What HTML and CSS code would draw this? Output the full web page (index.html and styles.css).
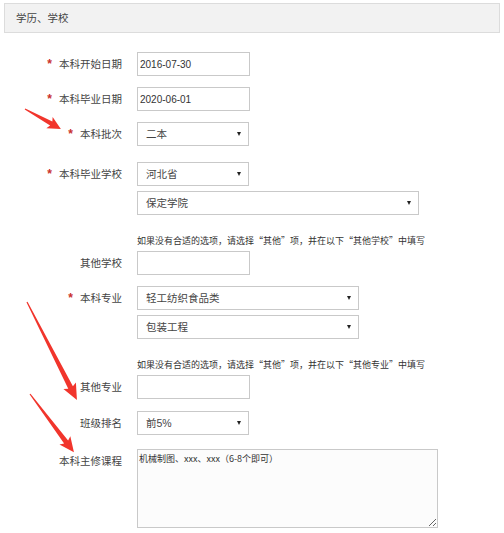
FILE: index.html
```html
<!DOCTYPE html>
<html lang="zh-CN">
<head>
    <meta charset="UTF-8">
    <meta name="viewport" content="width=device-width, initial-scale=1.0">
    <title>学历、学校</title>
    <link rel="stylesheet" href="styles.css">
</head>
<body>
    <div class="panel-head">学历、学校</div>

    <div class="form">
        <div class="row">
            <label class="lbl"><span class="req">*</span>本科开始日期</label>
            <div class="field"><input class="txt" type="text" value="2016-07-30"></div>
        </div>
        <div class="row">
            <label class="lbl"><span class="req">*</span>本科毕业日期</label>
            <div class="field"><input class="txt" type="text" value="2020-06-01"></div>
        </div>
        <div class="row">
            <label class="lbl"><span class="req">*</span>本科批次</label>
            <div class="field">
                <span class="sel short"><select><option>二本</option></select></span>
            </div>
        </div>
        <div class="row school">
            <label class="lbl"><span class="req">*</span>本科毕业学校</label>
            <div class="field">
                <span class="sel short"><select><option>河北省</option></select></span>
                <span class="sel wide"><select><option>保定学院</option></select></span>
            </div>
        </div>
        <div class="row hint-row">
            <span class="lbl"></span>
            <p class="hint">如果没有合适的选项，请选择“其他”项，并在以下“其他学校”中填写</p>
        </div>
        <div class="row">
            <label class="lbl">其他学校</label>
            <div class="field"><input class="txt" type="text"></div>
        </div>
        <div class="row">
            <label class="lbl"><span class="req">*</span>本科专业</label>
            <div class="field">
                <span class="sel mid"><select><option>轻工纺织食品类</option></select></span>
                <span class="sel mid"><select><option>包装工程</option></select></span>
            </div>
        </div>
        <div class="row hint-row">
            <span class="lbl"></span>
            <p class="hint">如果没有合适的选项，请选择“其他”项，并在以下“其他专业”中填写</p>
        </div>
        <div class="row">
            <label class="lbl">其他专业</label>
            <div class="field"><input class="txt" type="text"></div>
        </div>
        <div class="row rank">
            <label class="lbl">班级排名</label>
            <div class="field">
                <span class="sel short"><select><option>前5%</option></select></span>
            </div>
        </div>
        <div class="row course">
            <label class="lbl">本科主修课程</label>
            <div class="field"><textarea class="area">机械制图、xxx、xxx（6-8个即可）</textarea></div>
        </div>
    </div>

    <!-- red arrows drawn over the form -->
    <svg class="arrows" width="504" height="533" viewBox="0 0 504 533">
        <polygon transform="translate(25,109) rotate(29)" points="0,-0.6 30,-2.3 28,-6.5 41,0 28,6.5 30,2.3 0,0.6"/>
        <polygon transform="translate(27,302) rotate(63)" points="0,-0.6 96,-2.6 94,-7 110,0 94,7 96,2.6 0,0.6"/>
        <polygon transform="translate(30,394) rotate(53)" points="0,-0.6 60,-2.5 58,-6.8 73,0 58,6.8 60,2.5 0,0.6"/>
    </svg>
</body>
</html>
```

FILE: styles.css
```css
*{
    margin: 0;
    padding: 0;
    box-sizing: border-box;
}
body{
    position: relative;
    width: 504px;
    height: 533px;
    background: #fff;
    color: #333;
    font-family: "Liberation Sans", "Noto Sans CJK SC", sans-serif;
    font-size: 10.5px;
}
.panel-head{
    margin: 3px 4px 0;
    height: 30px;
    line-height: 28px;
    padding-left: 11px;
    background-color: #f2f2f2;
    border: 1px solid #dcdcdc;
    color: #444;
}
.form{
    display: flex;
    flex-direction: column;
    padding-top: 19px;
}
.row{
    display: grid;
    grid-template-columns: 122px 1fr;
    column-gap: 15px;
    margin-bottom: 11px;
}
.row.school{
    margin-top: 5px;
}
.row.hint-row{
    margin-top: 9px;
    margin-bottom: 4px;
}
.row.rank{
    margin-top: 1px;
}
.row.course{
    margin-top: 3px;
}
.lbl{
    text-align: right;
    line-height: 24px;
    color: #444;
}
.req{
    color: #c9302c;
    font-weight: bold;
    font-size: 12px;
    margin-right: 7px;
}
.field{
    display: flex;
    flex-direction: column;
    align-items: flex-start;
    gap: 5px;
}
.txt{
    width: 113px;
    height: 24px;
    border: 1px solid #c9c9c9;
    padding: 0 2px;
    font-family: "Liberation Sans", "Noto Sans CJK SC", sans-serif;
    font-size: 10px;
    color: #333;
    background: #fff;
    outline: none;
}
.sel{
    position: relative;
    display: block;
}
.sel select{
    width: 100%;
    height: 24px;
    border: 1px solid #c9c9c9;
    background: #fff;
    padding: 0 8px;
    font-family: "Liberation Sans", "Noto Sans CJK SC", sans-serif;
    font-size: 10.5px;
    color: #444;
    appearance: none;
    -webkit-appearance: none;
    outline: none;
}
.sel::after{
    content: "";
    position: absolute;
    right: 8px;
    top: 10px;
    border-left: 2px solid transparent;
    border-right: 2px solid transparent;
    border-top: 4px solid #222;
}
.sel.short{
    width: 112px;
}
.sel.mid{
    width: 222px;
}
.sel.wide{
    width: 282px;
}
.hint{
    font-family: "Noto Sans CJK SC", sans-serif;
    font-size: 9px;
    line-height: 12px;
    color: #333;
    white-space: nowrap;
}
.area{
    width: 301px;
    height: 79px;
    border: 1px solid #c9c9c9;
    background: #fcfcfc;
    padding: 3px 1px;
    font-family: "Noto Sans CJK SC", "DejaVu Sans Mono", monospace;
    font-size: 9px;
    line-height: 12px;
    color: #333;
    outline: none;
}
.arrows{
    position: absolute;
    left: 0;
    top: 0;
    pointer-events: none;
}
.arrows polygon{
    fill: #f1352c;
}
```
